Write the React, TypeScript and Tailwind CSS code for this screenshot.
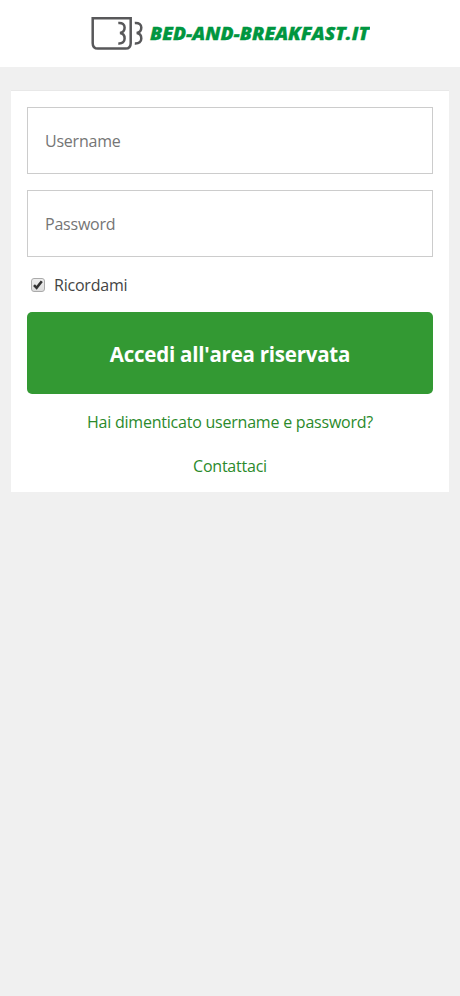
import { useState } from "react";

function Logo() {
	return (
		<svg width="280" height="40" viewBox="90 14 280 40" role="img" aria-label="Bed-and-Breakfast.it">
			<g fill="none" stroke="#58585a" strokeWidth="2.5">
				<path d="M92.7 18.3H130.7V43.2Q130.7 48.6 125.5 48.6H97.9Q92.7 48.6 92.7 43.2Z" />
				<path d="M118.3 23C122.5 22.6 124.6 24.4 124.6 27.5C124.6 30.6 122.9 32.5 120 33C123 33.3 124.6 35.4 124.6 38.4C124.6 41.7 122.5 43.7 118.3 43.4" />
				<path d="M134.8 23C139 22.6 141.3 24.4 141.3 27.5C141.3 30.6 139.5 32.5 136.7 33C139.5 33.3 141.3 35.4 141.3 38.4C141.3 41.7 139 43.7 134.8 43.4" />
			</g>
			<text
				x="150"
				y="40"
				fill="#009640"
				stroke="#009640"
				strokeWidth="0.3"
				textLength="219"
				lengthAdjust="spacingAndGlyphs"
				className="font-['Open_Sans',sans-serif] text-[18px] font-extrabold tracking-normal italic"
			>
				BED-AND-BREAKFAST.IT
			</text>
		</svg>
	);
}

export default function App() {
	const [remember, setRemember] = useState(true);

	return (
		<div className="min-h-screen bg-[#f0f0f0] font-['Open_Sans',sans-serif] text-base tracking-[-0.22px] text-[#444]">
			<header className="flex h-[67px] justify-center bg-white pt-3.5">
				<Logo />
			</header>

			<main className="px-[11px] pt-[23px]">
				<form
					className="h-[402px] border-t border-[#e8e8e8] bg-white px-4 pt-4"
					onSubmit={(e) => e.preventDefault()}
				>
					<input
						type="text"
						aria-label="Username"
						placeholder="Username"
						className="block h-[67px] w-full border border-[#ccc] px-[17px] placeholder:text-[#757575]"
					/>
					<input
						type="password"
						aria-label="Password"
						placeholder="Password"
						className="mt-4 block h-[67px] w-full border border-[#ccc] px-[17px] placeholder:text-[#757575]"
					/>

					{/* Remember me */}
					<label className="mt-4 flex h-6 w-fit items-center gap-[9px] pl-1">
						<input
							type="checkbox"
							className="peer sr-only"
							checked={remember}
							onChange={(e) => setRemember(e.target.checked)}
						/>
						<span className="flex size-3.5 items-center justify-center rounded-[3px] border border-[#aaa] bg-linear-to-b from-[#eee] to-[#ddd]">
							{remember && (
								<svg width="12" height="12" viewBox="0 0 12 12" fill="none" stroke="#333" strokeWidth="2.6">
									<path d="M2 6.2L4.6 8.8L9.8 2.2" />
								</svg>
							)}
						</span>
						<span>Ricordami</span>
					</label>

					<button
						type="submit"
						className="mt-[15px] block h-[82px] w-full rounded-[5px] bg-[#339933] pt-0.5 text-[20.5px] font-bold tracking-[-0.24px] text-white"
					>
						Accedi all'area riservata
					</button>

					{/* Links */}
					<nav className="mt-4 flex flex-col items-center gap-5 text-[#2b8a2b]">
						<a href="#">Hai dimenticato username e password?</a>
						<a href="#">Contattaci</a>
					</nav>
				</form>
			</main>
		</div>
	);
}
